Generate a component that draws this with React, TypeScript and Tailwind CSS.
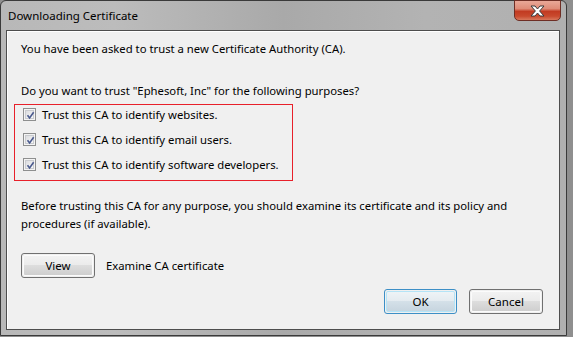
import React from "react";

const font = { fontFamily: '"Noto Sans", "Open Sans", sans-serif' };

function Check() {
  return (
    <div className="w-[13px] h-[13px] border border-[#8e8f8f] bg-[#f4f4f4] p-[1px] shrink-0">
      <div className="w-full h-full border border-[#c9cbcf] bg-gradient-to-br from-[#dcdde0] to-[#f7f7f7] relative">
        <svg width="9" height="9" viewBox="0 0 9 9" className="absolute left-[0px] top-[0px]">
          <path d="M1.5 4.2 L3.6 7 L7.6 1.2" fill="none" stroke="#4a5a8e" strokeWidth="1.6" />
        </svg>
      </div>
    </div>
  );
}

function Btn({ label, def, w }: { label: string; def?: boolean; w: string }) {
  return (
    <div
      className={`${w} h-[25px] rounded-[3px] border ${def ? "border-[#3d8fc6]" : "border-[#707070]"} p-[1px]`}
    >
      <div
        className={`w-full h-full rounded-[2px] border ${def ? "border-[#b4e4f7]" : "border-[#fbfbfb]"} flex items-center justify-center text-[11.5px] text-black ${def ? "bg-[linear-gradient(#eef3f6_0%,#e4ebf0_48%,#d4e0e8_50%,#c7d5df_100%)]" : "bg-[linear-gradient(#f2f2f2_0%,#ebebeb_48%,#dddddd_50%,#cfcfcf_100%)]"}`}
      >
        {label}
      </div>
    </div>
  );
}

export default function App() {
  return (
    <div className="w-[573px] h-[337px] bg-[#8f8f8f] overflow-hidden relative" style={font}>
      <div className="w-[567px] h-[336px] rounded-t-[6px] border border-[#3a3a3a] bg-[linear-gradient(90deg,#b8b8b8_0%,#bcbcbc_20%,#a9a9a9_50%,#b3b3b3_75%,#b0b0b0_100%)] flex flex-col relative">
        <div className="h-[29px] flex items-start justify-between shrink-0">
          <div className="pl-[7px] pt-[7px] text-[11.5px] leading-[15px] text-black">Downloading Certificate</div>
          <div className="mr-[5px] mt-[-1px] w-[47px] h-[21px] rounded-b-[5px] border border-[#6e2e25] bg-[linear-gradient(#e9a898_0%,#df8c78_40%,#c23b22_55%,#c94a2e_80%,#d8785c_100%)] flex items-center justify-center">
            <svg width="15" height="12" viewBox="0 0 15 12">
              <path
                d="M1 1 H5 L7.5 4 L10 1 H14 L9.6 6 L14 11 H10 L7.5 8 L5 11 H1 L5.4 6 Z"
                fill="#ffffff"
                stroke="#3a3a3a"
                strokeWidth="1"
                strokeLinejoin="round"
              />
            </svg>
          </div>
        </div>
        <div className="flex-1 ml-[5px] mr-[6px] mb-[5px] border border-[#4d4d4d] bg-[#f0f0f0] shadow-[inset_1px_1px_0_#ffffff] flex flex-col text-[11.3px] leading-[15px] text-black">
          <div className="pl-[14px] pt-[10px]">You have been asked to trust a new Certificate Authority (CA).</div>
          <div className="pl-[14px] mt-[27px]">Do you want to trust "Ephesoft, Inc" for the following purposes?</div>
          <div className="ml-[7px] mt-[6px] w-[279px] h-[77px] border border-[#e8202a] flex flex-col pl-[8px] pt-[3px] gap-[12px]">
            {[
              "Trust this CA to identify websites.",
              "Trust this CA to identify email users.",
              "Trust this CA to identify software developers.",
            ].map((t) => (
              <div key={t} className="flex items-center gap-[6px] h-[13px] whitespace-nowrap">
                <Check />
                <span>{t}</span>
              </div>
            ))}
          </div>
          <div className="pl-[14px] mt-[16px] leading-[18px] w-[540px]">
            Before trusting this CA for any purpose, you should examine its certificate and its policy and procedures (if available).
          </div>
          <div className="pl-[14px] mt-[20px] flex items-center gap-[11px]">
            <Btn label="View" w="w-[74px]" />
            <span>Examine CA certificate</span>
          </div>
          <div className="mt-[11px] flex justify-end gap-[12px] pr-[16px]">
            <Btn label="OK" def w="w-[73px]" />
            <Btn label="Cancel" w="w-[74px]" />
          </div>
        </div>
      </div>
    </div>
  );
}
